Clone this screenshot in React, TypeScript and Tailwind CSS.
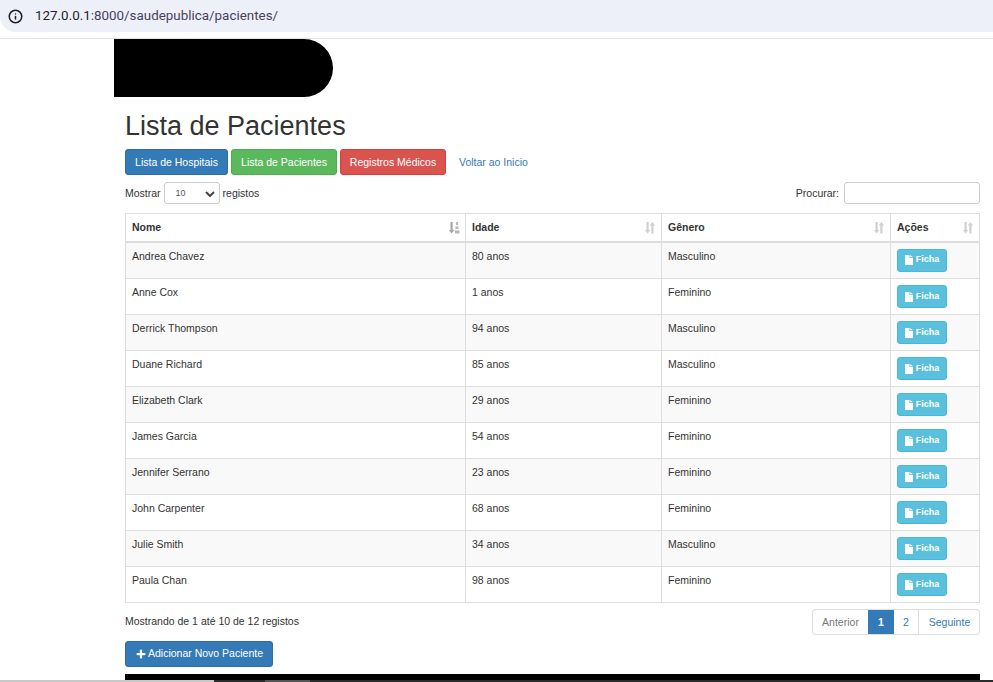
import { Info, Plus } from 'lucide-react';

const patients = [
  { name: 'Andrea Chavez', age: '80 anos', gender: 'Masculino' },
  { name: 'Anne Cox', age: '1 anos', gender: 'Feminino' },
  { name: 'Derrick Thompson', age: '94 anos', gender: 'Masculino' },
  { name: 'Duane Richard', age: '85 anos', gender: 'Masculino' },
  { name: 'Elizabeth Clark', age: '29 anos', gender: 'Feminino' },
  { name: 'James Garcia', age: '54 anos', gender: 'Feminino' },
  { name: 'Jennifer Serrano', age: '23 anos', gender: 'Feminino' },
  { name: 'John Carpenter', age: '68 anos', gender: 'Feminino' },
  { name: 'Julie Smith', age: '34 anos', gender: 'Masculino' },
  { name: 'Paula Chan', age: '98 anos', gender: 'Feminino' },
];

function SortIcon({ active }: { active?: boolean }) {
  return (
    <svg width="12" height="12" viewBox="0 0 12 12" className="absolute right-[5px] top-[8px]">
      <path d="M2.500 0h2.200v8h1.600L3.600 11.500 .9 8h1.600z" fill={active ? '#a8a8a8' : '#d0d0d0'} />
      {active ? (
        <path d="M8 0h2v3H8zM7.500 4.500h3v2.500h-3zM7 8.500h4.500V11.500H7z" fill="#b8b8b8" />
      ) : (
        <path d="M9.500 11.500H7.300V3.500H5.700L8.400 0l2.700 3.500H9.500z" fill="#d0d0d0" />
      )}
    </svg>
  );
}

function FileIcon() {
  return (
    <svg width="8" height="10" viewBox="0 0 8 10" fill="#fff">
      <path d="M0 0h4.500v3H8v7H0zM5.300 0 8 2.300H5.300z" />
    </svg>
  );
}

export default function App() {
  return (
    <div className="relative h-[682px] w-[993px] overflow-hidden bg-white font-['Liberation_Sans',Arial,sans-serif] text-[10.500px] text-[#333]">
      <div className="flex h-[39px] border-b border-[#e2e2e2] bg-white">
        <div className="flex h-[32px] flex-1 items-center rounded-bl-[16px] bg-[#edf0f9] pl-[8px]">
          <Info size={15} strokeWidth={2.500} className="text-[#222]" />
          <span className="ml-[12px] font-['Roboto',sans-serif] text-[13.400px] text-[#4a3f5c]">
            <span className="text-[#1f1f1f]">127.0.0.1</span>:8000/saudepublica/pacientes/
          </span>
        </div>
      </div>

      <div className="ml-[114px] h-[58px] w-[219px] rounded-r-[29px] bg-black" />

      <div className="ml-[125px] w-[855px]">
        <h1 className="mt-[13px] text-[27px] leading-[32px] font-normal">Lista de Pacientes</h1>

        <div className="mt-[7px] flex items-center">
          <button className="h-[26px] w-[103px] rounded-[3px] border border-[#2e6da4] bg-[#337ab7] pt-[1px] text-[10.500px] text-white">Lista de Hospitais</button>
          <button className="ml-[3px] h-[26px] w-[106px] rounded-[3px] border border-[#4cae4c] bg-[#5cb85c] pt-[1px] text-[10.500px] text-white">Lista de Pacientes</button>
          <button className="ml-[3px] h-[26px] w-[106px] rounded-[3px] border border-[#d43f3a] bg-[#d9534f] pt-[1px] text-[10.500px] text-white">Registros Médicos</button>
          <a className="ml-[13px] pt-[1px] text-[10.500px] text-[#337ab7]">Voltar ao Inicio</a>
        </div>

        <div className="mt-[7px] flex h-[22px] items-center justify-between">
          <div className="flex items-center">
            <span className="pt-[1px]">Mostrar</span>
            <div className="relative mx-[3px] h-[22px] w-[56px] rounded-[3px] border border-[#ccc] pl-[11px] text-[9px] leading-[20px] text-[#555]">
              10
              <svg width="10" height="6" viewBox="0 0 10 6" className="absolute right-[4px] top-[8px]">
                <path d="M1 1l4 4 4-4" fill="none" stroke="#444" strokeWidth="2" />
              </svg>
            </div>
            <span className="pt-[1px]">registos</span>
          </div>
          <div className="flex items-center">
            <span className="pt-[1px]">Procurar:</span>
            <div className="ml-[5px] h-[22px] w-[136px] rounded-[3px] border border-[#ccc] bg-white" />
          </div>
        </div>

        <table className="mt-[9px] w-[854px] table-fixed border-collapse">
          <colgroup>
            <col className="w-[340px]" />
            <col className="w-[196px]" />
            <col className="w-[229px]" />
            <col className="w-[89px]" />
          </colgroup>
          <thead>
            <tr className="h-[28px]">
              {['Nome', 'Idade', 'Gênero', 'Ações'].map((h, i) => (
                <th key={h} className="relative border border-b-2 border-[#ddd] px-[6px] pt-[1px] text-left align-middle font-bold">
                  {h}
                  <SortIcon active={i === 0} />
                </th>
              ))}
            </tr>
          </thead>
          <tbody>
            {patients.map((p, i) => (
              <tr key={p.name} className={i === 0 ? 'h-[37px] bg-[#f9f9f9]' : i % 2 === 0 ? 'h-[36px] bg-[#f9f9f9]' : 'h-[36px]'}>
                <td className="border border-[#ddd] px-[6px] pt-[6px] align-top">{p.name}</td>
                <td className="border border-[#ddd] px-[6px] pt-[6px] align-top">{p.age}</td>
                <td className="border border-[#ddd] px-[6px] pt-[6px] align-top">{p.gender}</td>
                <td className="border border-[#ddd] px-[6px] align-top">
                  <button className="mt-[6px] flex h-[23px] w-[50px] items-center justify-center gap-[3px] rounded-[3px] border border-[#46b8da] bg-[#5bc0de] text-[9px] font-bold text-white">
                    <FileIcon />
                    Ficha
                  </button>
                </td>
              </tr>
            ))}
          </tbody>
        </table>

        <div className="mt-[6px] flex h-[26px] items-center justify-between">
          <span>Mostrando de 1 até 10 de 12 registos</span>
          <div className="flex h-[26px] overflow-hidden rounded-[3px] border border-[#ddd] text-[10.500px] leading-[24px]">
            <span className="w-[55px] text-center text-[#777]">Anterior</span>
            <span className="w-[26px] bg-[#337ab7] text-center font-bold text-white">1</span>
            <span className="w-[25px] border-r border-[#ddd] text-center text-[#337ab7]">2</span>
            <span className="w-[60px] pl-[1px] text-center text-[#337ab7]">Seguinte</span>
          </div>
        </div>

        <button className="mt-[6px] flex h-[26px] w-[148px] items-center justify-center gap-[1px] rounded-[3px] border border-[#2e6da4] bg-[#337ab7] text-[10.500px] text-white">
          <Plus size={12} strokeWidth={4.500} />
          Adicionar Novo Paciente
        </button>

        <div className="mt-[7px] h-[8px] w-[855px] bg-black" />
      </div>

      {/* strip of the window behind, runs along the bottom edge */}
      <div className="absolute bottom-0 left-0 flex h-[2px] w-[993px]">
        <div className="w-[214px] bg-[#c8c8c8]" />
        <div className="w-[51px] bg-[#2b2b2b]" />
        <div className="w-[45px] bg-[#555]" />
        <div className="flex-1 bg-[#2b2b2b]" />
      </div>
    </div>
  );
}
